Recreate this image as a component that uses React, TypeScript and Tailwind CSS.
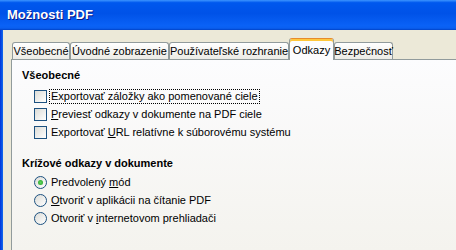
import React from 'react'

const font = { fontFamily: '"Liberation Sans", Arial, sans-serif' }

function Tab({ label, width, active }: { label: string; width: number; active?: boolean }) {
  if (active) {
    return (
      <div
        className="relative z-10 -mb-px flex h-[22px] items-start justify-center whitespace-nowrap rounded-t-[3px] border border-b-0 border-[#919b9c] border-t-[#e68b2c] bg-[#fcfcfe] pt-[3px] text-black shadow-[inset_0_2px_0_#ffc73c]"
        style={{ width }}
      >
        {label}
      </div>
    )
  }
  return (
    <div
      className="flex h-[17px] items-center justify-center whitespace-nowrap rounded-t-[3px] border border-b-0 border-[#919b9c] bg-gradient-to-b from-white to-[#ecebe6] text-black"
      style={{ width }}
    >
      {label}
    </div>
  )
}

function Check({ children, focus }: { children: React.ReactNode; focus?: boolean }) {
  return (
    <div className="flex h-[18px] items-center">
      <div className="h-[13px] w-[13px] border border-[#1c5180] bg-gradient-to-br from-[#dcdcd7] to-white" />
      <span className={`ml-[3px] px-px leading-[13px] ${focus ? 'outline outline-1 outline-dotted outline-black' : ''}`}>
        {children}
      </span>
    </div>
  )
}

function Radio({ children, checked }: { children: React.ReactNode; checked?: boolean }) {
  return (
    <div className="flex h-[18px] items-center">
      <div className="flex h-[13px] w-[13px] items-center justify-center rounded-full border border-[#1c5180] bg-gradient-to-br from-[#dcdcd7] to-white">
        {checked && <div className="h-[5px] w-[5px] rounded-full bg-[radial-gradient(circle,#5fd35f,#21a121)]" />}
      </div>
      <span className="ml-[4px] leading-[13px]">{children}</span>
    </div>
  )
}

export default function App() {
  return (
    <div className="flex h-[250px] w-[456px] flex-col overflow-hidden text-[11px] text-black" style={font}>
      {/* Title bar */}
      <div className="flex h-[30px] shrink-0 items-center bg-[linear-gradient(to_bottom,#3d95ff_0%,#0058ee_9%,#0052e8_45%,#0a62f6_85%,#0a5ff0_94%,#0042c6_100%)] pl-[7px] pb-[1px]">
        <span className="text-[13px] font-bold text-white [text-shadow:1px_1px_#0a1883]">
          Možnosti PDF
        </span>
      </div>

      {/* Body */}
      <div className="flex flex-1">
        <div className="w-[3px] bg-gradient-to-r from-[#0831d9] to-[#166aee]" />
        <div className="flex flex-1 flex-col bg-[#ece9d8] pl-[8px] pt-[8px]">
          <div className="flex items-end pl-[1px]">
            <Tab label="Všeobecné" width={58} />
            <Tab label="Úvodné zobrazenie" width={99} />
            <Tab label="Používateľské rozhranie" width={120} />
            <Tab label="Odkazy" width={45} active />
            <Tab label="Bezpečnosť" width={59} />
          </div>
          <div className="flex-1 border-l border-t border-[#919b9c] bg-gradient-to-b from-[#fcfcfe] to-[#f4f3ee] pl-[10px] pt-[8px]">
            <div className="h-[14px] font-bold leading-[14px]">Všeobecné</div>
            <div className="ml-[12px] mt-[5px]">
              <Check focus>Exportovať záložky ako pomenované ciele</Check>
              <Check>
                <u>P</u>reviesť odkazy v dokumente na PDF ciele
              </Check>
              <Check>
                Exportovať <u>U</u>RL relatívne k súborovému systému
              </Check>
            </div>
            <div className="mt-[15px] h-[14px] font-bold leading-[14px]">Krížové odkazy v dokumente</div>
            <div className="ml-[12px] mt-[3px]">
              <Radio checked>
                Predvolený <u>m</u>ód
              </Radio>
              <Radio>
                <u>O</u>tvoriť v aplikácii na čítanie PDF
              </Radio>
              <Radio>
                Otvoriť v <u>i</u>nternetovom prehliadači
              </Radio>
            </div>
          </div>
        </div>
      </div>
    </div>
  )
}
